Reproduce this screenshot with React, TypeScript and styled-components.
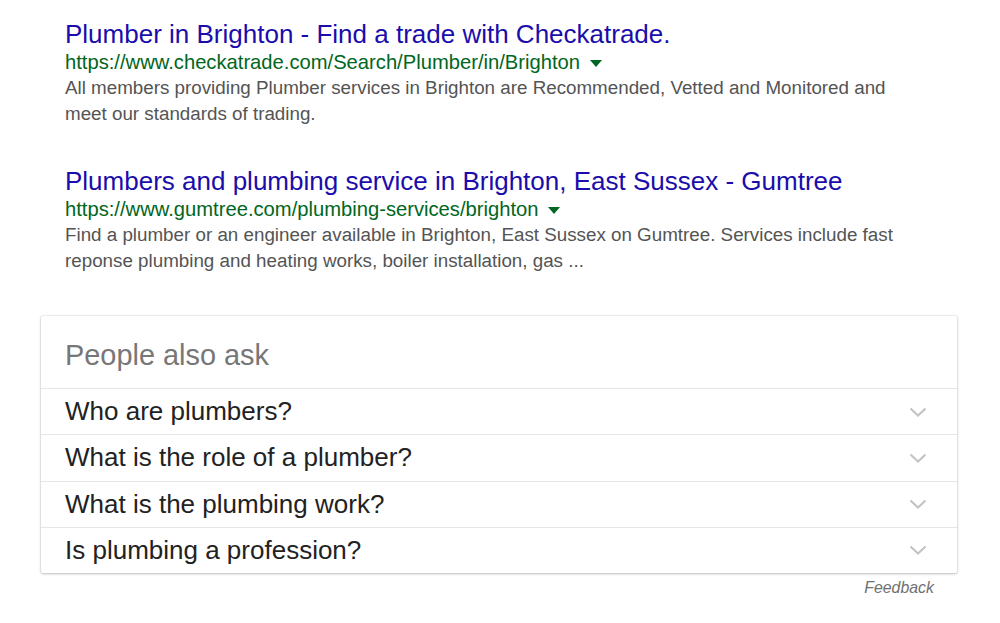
import styled, { createGlobalStyle } from "styled-components";

const GlobalStyle = createGlobalStyle`
  html, body {
    margin: 0;
    padding: 0;
    background: #fff;
    font-family: "Liberation Sans", Arial, Helvetica, sans-serif;
  }
`;

const Page = styled.div`
  width: 1000px;
  height: 623px;
  padding: 19px 0 0 41px;
  box-sizing: border-box;
  display: flex;
  flex-direction: column;
`;

const Results = styled.div`
  display: flex;
  flex-direction: column;
  gap: 39px;
  padding-left: 24px;
`;

const Result = styled.div`
  display: flex;
  flex-direction: column;
  width: 840px;
`;

const Title = styled.a`
  font-size: 26px;
  line-height: 31px;
  color: #1a0dab;
  text-decoration: none;
  white-space: nowrap;
`;

const UrlRow = styled.div`
  display: flex;
  align-items: center;
  height: 25px;
`;

const Url = styled.cite`
  font-style: normal;
  font-size: 20.2px;
  line-height: 25px;
  color: #006621;
  white-space: nowrap;
`;

const Caret = styled.span`
  width: 0;
  height: 0;
  margin-left: 10px;
  margin-top: 2px;
  border-left: 6px solid transparent;
  border-right: 6px solid transparent;
  border-top: 7px solid #006621;
`;

const Snippet = styled.div`
  font-size: 18.8px;
  line-height: 26px;
  color: #545454;
`;

const Card = styled.div`
  margin-top: 42px;
  width: 916px;
  border-radius: 2px;
  box-shadow: 0 1px 3px rgba(0, 0, 0, 0.22), 0 0 0 1px rgba(0, 0, 0, 0.05);
  background: #fff;
`;

const CardHeader = styled.div`
  height: 72px;
  padding: 0 24px;
  display: flex;
  align-items: center;
  padding-top: 6px;
  box-sizing: border-box;
  font-size: 28.9px;
  color: #777;
`;

const Question = styled.div`
  height: 46.25px;
  border-top: 1px solid #e6e6e6;
  padding: 0 30px 0 24px;
  display: flex;
  align-items: center;
  justify-content: space-between;
  font-size: 26px;
  color: #222;
  box-sizing: border-box;
`;

const Chevron = () => (
  <svg width="18" height="10" viewBox="0 0 18 10" aria-hidden>
    <path d="M1.5 1.5 L9 8.5 L16.5 1.5" fill="none" stroke="#c4c4c4" strokeWidth="2.2" />
  </svg>
);

const Feedback = styled.div`
  width: 916px;
  padding-right: 23px;
  box-sizing: border-box;
  text-align: right;
  font-size: 15.9px;
  line-height: 20px;
  margin-top: 5px;
  font-style: italic;
  color: #707070;
`;

const results = [
  {
    title: "Plumber in Brighton - Find a trade with Checkatrade.",
    url: "https://www.checkatrade.com/Search/Plumber/in/Brighton",
    snippet:
      "All members providing Plumber services in Brighton are Recommended, Vetted and Monitored and meet our standards of trading.",
  },
  {
    title: "Plumbers and plumbing service in Brighton, East Sussex - Gumtree",
    url: "https://www.gumtree.com/plumbing-services/brighton",
    snippet:
      "Find a plumber or an engineer available in Brighton, East Sussex on Gumtree. Services include fast reponse plumbing and heating works, boiler installation, gas ...",
  },
];

const questions = [
  "Who are plumbers?",
  "What is the role of a plumber?",
  "What is the plumbing work?",
  "Is plumbing a profession?",
];

export default function App() {
  return (
    <>
      <GlobalStyle />
      <Page>
        <Results>
          {results.map((r) => (
            <Result key={r.url}>
              <Title href="#">{r.title}</Title>
              <UrlRow>
                <Url>{r.url}</Url>
                <Caret />
              </UrlRow>
              <Snippet>{r.snippet}</Snippet>
            </Result>
          ))}
        </Results>
        <Card>
          <CardHeader>People also ask</CardHeader>
          {questions.map((q) => (
            <Question key={q}>
              {q}
              <Chevron />
            </Question>
          ))}
        </Card>
        <Feedback>Feedback</Feedback>
      </Page>
    </>
  );
}
